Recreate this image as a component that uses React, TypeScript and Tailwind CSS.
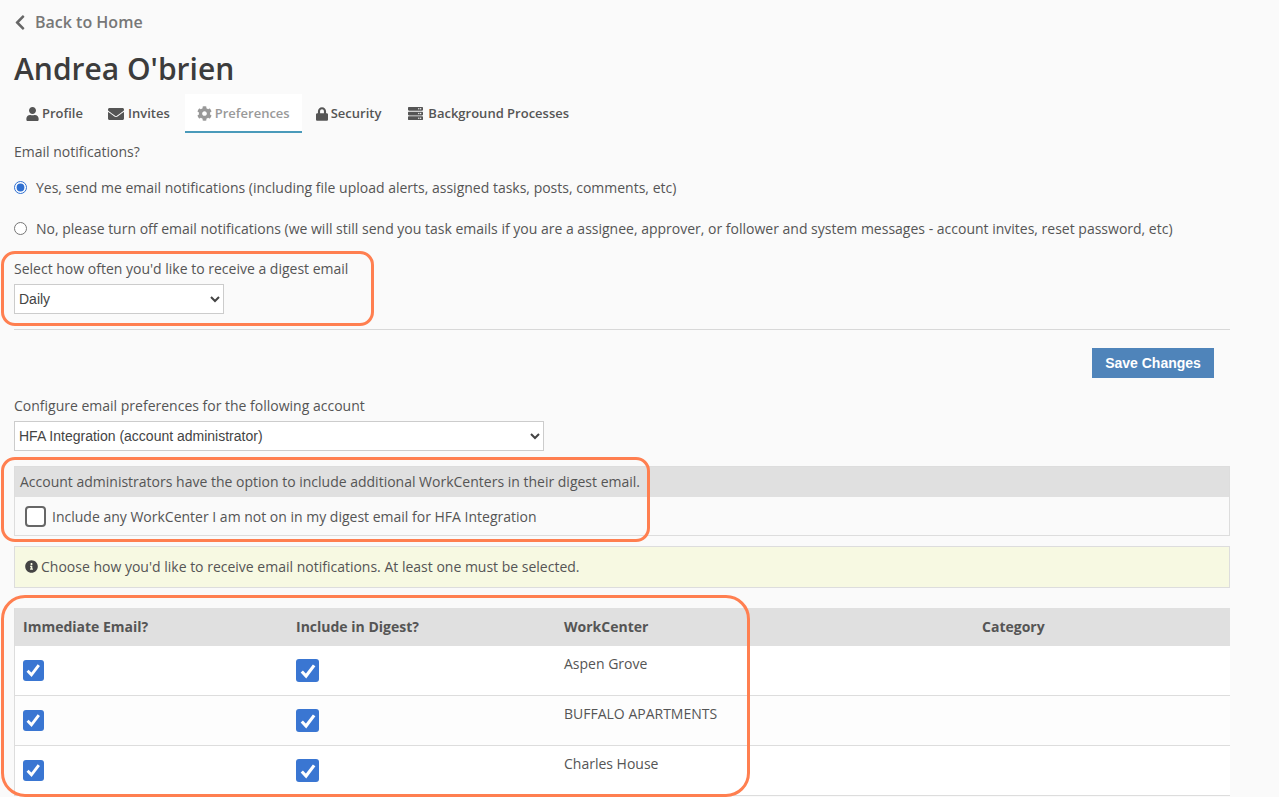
import React from "react";
import { FaUser, FaEnvelope, FaCog, FaLock, FaChevronLeft, FaInfoCircle, FaServer } from "react-icons/fa";

const tabs = [
  { label: "Profile", icon: <FaUser className="w-[13px] h-[14px]" />, cls: "pr-[10px]" },
  { label: "Invites", icon: <FaEnvelope className="w-[18px] h-[16px]" />, cls: "pr-[13px]" },
  { label: "Preferences", icon: <FaCog className="w-[15px] h-[15px]" />, active: true, cls: "pr-[12px]" },
  { label: "Security", icon: <FaLock className="w-[12px] h-[14px]" />, cls: "pr-[11px]" },
  { label: "Background Processes", icon: <FaServer className="w-[19px] h-[15px]" />, cls: "pr-[12px]" },
];

function Check({ size }: { size: string }) {
  return (
    <span className={`${size} flex items-center justify-center rounded-[3px] bg-[#3a76d2]`}>
      <svg viewBox="0 0 16 16" className="w-[78%] h-[78%]" fill="none" stroke="#fff" strokeWidth="2.8">
        <path d="M2.5 8.5 L6.3 12.5 L13.5 3" />
      </svg>
    </span>
  );
}

const rows = ["Aspen Grove", "BUFFALO APARTMENTS", "Charles House"];

export default function App() {
  return (
    <div className="relative h-[797px] overflow-hidden bg-[#fafafa] pl-[14px] pr-[49px] font-['Open_Sans',sans-serif] text-[14px] text-[#555]">
      <div className="flex h-[44px] items-center gap-[9px] text-[16px] font-semibold text-[#777]">
        <FaChevronLeft className="h-[17px] w-[12px] text-[#666]" />
        <span>Back to Home</span>
      </div>
      <h1 className="mt-[5px] h-[40px] text-[30px] leading-[40px] font-semibold text-[#3c3c3c]">Andrea O'brien</h1>
      <div className="mt-[5px] flex h-[39px] gap-[2px] text-[13px] font-semibold text-[#555]">
        {tabs.map((t) => (
          <div
            key={t.label}
            className={
              t.active
                ? `flex items-center gap-[3px] border-b-2 border-[#4a9aba] bg-white pl-[12px] pt-[2px] text-[#999] ${t.cls}`
                : `flex items-center gap-[3px] pl-[12px] ${t.cls}`
            }
          >
            {t.icon}
            <span>{t.label}</span>
          </div>
        ))}
      </div>
      <p className="mt-[9px] h-[20px] leading-[20px]">Email notifications?</p>
      <label className="mt-[15px] flex h-[20px] items-center gap-[9px] leading-[20px]">
        <input type="radio" name="n" defaultChecked className="m-0 h-[13px] w-[13px] accent-[#2f6fd0]" />
        <span className="pt-[2px]">Yes, send me email notifications (including file upload alerts, assigned tasks, posts, comments, etc)</span>
      </label>
      <label className="mt-[21px] flex h-[20px] items-center gap-[9px] leading-[20px]">
        <input type="radio" name="n" className="m-0 h-[13px] w-[13px]" />
        <span className="pt-[2px]">No, please turn off email notifications (we will still send you task emails if you are a assignee, approver, or follower and system messages - account invites, reset password, etc)</span>
      </label>
      <p className="mt-[21px] h-[20px] leading-[20px]">Select how often you'd like to receive a digest email</p>
      <select className="mt-[5px] block h-[30px] w-[210px] border border-[#ccc] bg-white font-['Liberation_Sans',sans-serif] text-[14px] text-[#444]">
        <option>Daily</option>
      </select>
      <div className="mt-[15px] h-px bg-[#d8d8d8]" />
      <div className="mt-[18px] flex justify-end pr-[16px]">
        <button className="h-[30px] w-[122px] bg-[#4f84ba] font-['Liberation_Sans',sans-serif] text-[14px] font-bold text-white">Save Changes</button>
      </div>
      <p className="mt-[18px] h-[20px] leading-[20px]">Configure email preferences for the following account</p>
      <select className="mt-[5px] block h-[30px] w-[530px] border border-[#ccc] bg-white font-['Liberation_Sans',sans-serif] text-[14px] text-[#444]">
        <option>HFA Integration (account administrator)</option>
      </select>
      <div className="mt-[15px] h-[70px] border border-[#ddd]">
        <div className="flex h-[30px] items-center bg-[#e0e0e0] pb-[2px] pl-[5px]">Account administrators have the option to include additional WorkCenters in their digest email.</div>
        <div className="flex h-[38px] items-center gap-[6px] pl-[10px]">
          <span className="h-[21px] w-[21px] rounded-[4px] border-2 border-[#666] bg-white" />
          <span>Include any WorkCenter I am not on in my digest email for HFA Integration</span>
        </div>
      </div>
      <div className="mt-[10px] flex h-[42px] items-center gap-[3px] border border-[#ddd] bg-[#f7f9e2] pb-[2px] pl-[10px]">
        <FaInfoCircle className="h-[13px] w-[13px] text-[#444]" />
        <span>Choose how you'd like to receive email notifications. At least one must be selected.</span>
      </div>
      <div className="mt-[20px] border-l border-[#ddd]">
        <div className="grid h-[38px] grid-cols-[273px_268px_418px_1fr] items-center bg-[#e0e0e0] pb-[2px] pl-[8px] font-bold text-[#555]">
          <span>Immediate Email?</span>
          <span>Include in Digest?</span>
          <span>WorkCenter</span>
          <span>Category</span>
        </div>
        {rows.map((r) => (
          <div key={r} className="grid h-[50px] grid-cols-[273px_268px_418px_1fr] border-b border-[#ddd] bg-[#fdfdfd] pl-[8px] even:bg-white">
            <div className="flex h-[49px] items-center"><Check size="h-[21px] w-[21px]" /></div>
            <div className="flex h-[49px] items-center"><Check size="h-[23px] w-[23px]" /></div>
            <div className="pt-[8px] leading-[20px]">{r}</div>
            <div />
          </div>
        ))}
      </div>
      <div className="pointer-events-none absolute left-[1px] top-[251px] h-[75px] w-[373px] rounded-[14px] border-[3px] border-[#ff7f50]" />
      <div className="pointer-events-none absolute left-[1px] top-[457px] h-[85px] w-[649px] rounded-[14px] border-[3px] border-[#ff7f50]" />
      <div className="pointer-events-none absolute left-[1px] top-[595px] h-[202px] w-[749px] rounded-[24px] border-[3px] border-[#ff7f50]" />
    </div>
  );
}
